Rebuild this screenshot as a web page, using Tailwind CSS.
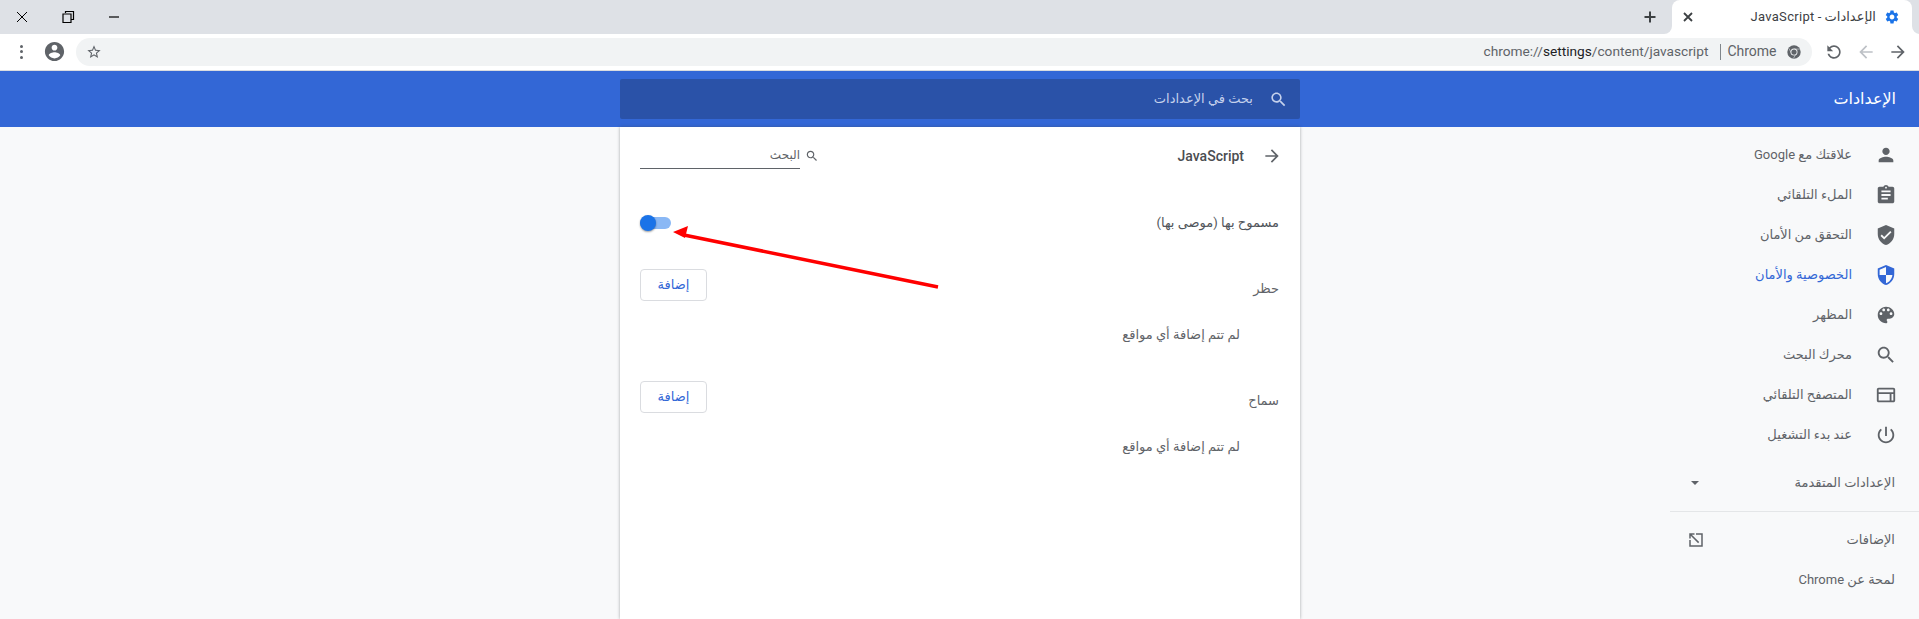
<!DOCTYPE html>
<html lang="ar">
  <head>
    <meta charset="UTF-8" />
    <title>الإعدادات - JavaScript</title>
    <script src="https://cdn.jsdelivr.net/npm/@tailwindcss/browser@4"></script>
  </head>
  <body class="h-[619px] overflow-hidden bg-[#f8f9fa] font-['Roboto','DejaVu_Sans',sans-serif] text-[13px] text-[#5f6368]">
    <!-- Tab strip -->
    <div class="flex h-[34px] items-center bg-[#dee1e6]">
      <div class="flex w-[1643px] items-center pl-[15px] text-black">
        <svg class="h-[14px] w-[14px]" viewBox="0 0 14 14" fill="none" stroke="currentColor"><path d="M2 2l10 10M12 2L2 12" /></svg>
        <svg class="ml-[32px] h-[14px] w-[14px]" viewBox="0 0 14 14" fill="none" stroke="currentColor" stroke-width="1.2"><path d="M4.500 3V1.500h8v8H10.500M2 4h8v8.500H2z" /></svg>
        <svg class="ml-[32px] h-[14px] w-[14px]" viewBox="0 0 14 14" fill="none" stroke="currentColor" stroke-width="1.2"><path d="M2 7h10" /></svg>
      </div>
      <svg class="h-[14px] w-[14px] text-[#3c4043]" viewBox="0 0 14 14" fill="none" stroke="currentColor" stroke-width="2"><path d="M7 1.500v11M1.500 7h11" /></svg>
      <div class="relative ml-[15px] flex h-[34px] w-[240px] items-center self-end rounded-t-lg bg-white pr-[12px] pl-[11px]">
        <div class="absolute bottom-0 -left-2 h-2 w-2 bg-white"><div class="h-2 w-2 rounded-br-lg bg-[#dee1e6]"></div></div>
        <div class="absolute -right-2 bottom-0 h-2 w-2 bg-white"><div class="h-2 w-2 rounded-bl-lg bg-[#dee1e6]"></div></div>
        <svg class="h-[10px] w-[10px] text-[#3c4043]" viewBox="0 0 10 10" fill="none" stroke="currentColor" stroke-width="1.800"><path d="M1 1l8 8M9 1L1 9" /></svg>
        <span dir="rtl" class="mr-[8px] ml-auto text-[13px] tracking-[0.3px] text-[#3c4043]">الإعدادات - JavaScript</span>
        <svg class="h-[16px] w-[16px] text-[#1a73e8]" viewBox="0 0 24 24" fill="currentColor"><path d="M19.140 12.940c.04-.3.06-.61.06-.94 0-.32-.02-.64-.07-.94l2.030-1.580c.18-.14.23-.41.12-.61l-1.920-3.320c-.12-.22-.37-.29-.59-.22l-2.390.96c-.5-.38-1.030-.7-1.620-.94l-.36-2.540c-.04-.24-.24-.41-.48-.41h-3.840c-.24 0-.43.17-.47.41l-.36 2.540c-.59.24-1.130.57-1.620.94l-2.390-.96c-.22-.08-.47 0-.59.22L2.740 8.870c-.12.21-.08.47.12.61l2.030 1.580c-.05.3-.09.63-.09.94s.02.64.07.94l-2.030 1.580c-.18.14-.23.41-.12.61l1.920 3.320c.12.22.37.29.59.22l2.390-.96c.5.38 1.030.7 1.620.94l.36 2.540c.05.24.24.41.48.41h3.840c.24 0 .44-.17.47-.41l.36-2.540c.59-.24 1.130-.56 1.620-.94l2.390.96c.22.08.47 0 .59-.22l1.920-3.320c.12-.22.07-.47-.12-.61l-2.010-1.580zM12 15.600c-1.980 0-3.600-1.620-3.600-3.600s1.620-3.600 3.600-3.600 3.600 1.620 3.600 3.600-1.620 3.600-3.600 3.600z" /></svg>
      </div>
    </div>

    <!-- Toolbar -->
    <div class="flex h-[37px] items-center border-b border-[#dadce0] bg-white pb-[1px]">
      <div class="ml-[19.500px] flex w-[4px] flex-col gap-[2.500px]">
        <span class="h-[3px] w-[3px] rounded-full bg-[#5f6368]"></span>
        <span class="h-[3px] w-[3px] rounded-full bg-[#5f6368]"></span>
        <span class="h-[3px] w-[3px] rounded-full bg-[#5f6368]"></span>
      </div>
      <svg class="ml-[19px] h-[23px] w-[23px] text-[#5f6368]" viewBox="0 0 24 24" fill="currentColor"><path d="M12 2C6.480 2 2 6.480 2 12s4.480 10 10 10 10-4.480 10-10S17.520 2 12 2zm0 3c1.660 0 3 1.340 3 3s-1.340 3-3 3-3-1.340-3-3 1.340-3 3-3zm0 14.200c-2.500 0-4.710-1.280-6-3.220.03-1.990 4-3.080 6-3.080 1.990 0 5.970 1.090 6 3.080-1.290 1.940-3.500 3.220-6 3.220z" /></svg>
      <div class="ml-[10px] flex h-[28px] w-[1736px] items-center rounded-full bg-[#f1f3f4]">
        <svg class="ml-[10px] h-[16px] w-[16px] text-[#5f6368]" viewBox="0 0 24 24" fill="currentColor"><path d="M22 9.240l-7.190-.62L12 2 9.190 8.630 2 9.240l5.460 4.730L5.820 21 12 17.270 18.180 21l-1.630-7.030L22 9.240zM12 15.400l-3.760 2.270 1-4.280-3.320-2.880 4.380-.38L12 6.100l1.710 4.040 4.380.38-3.320 2.880 1 4.280L12 15.400z" /></svg>
        <span class="ml-auto text-[13.700px] text-[#5f6368]">chrome://<span class="text-[#202124]">settings</span>/content/javascript</span>
        <span class="ml-[12px] h-[16px] w-[1px] bg-[#80868b]"></span>
        <span class="ml-[6px] text-[14px] text-[#5f6368]">Chrome</span>
        <svg class="mr-[11px] ml-[10px] h-[14px] w-[14px] text-[#5f6368]" viewBox="0 0 24 24"><circle cx="12" cy="12" r="11.500" fill="currentColor" /><path d="M12 7h10M8 14.500L3 5.500M16 14.500L11 23" stroke="#b5b8bc" stroke-width="1.500" /><circle cx="12" cy="12" r="6" fill="#f1f3f4" /><circle cx="12" cy="12" r="4.500" fill="currentColor" /></svg>
      </div>
      <svg class="ml-[12px] h-[20px] w-[20px] -scale-x-100 text-[#5f6368]" viewBox="0 0 24 24" fill="currentColor"><path d="M17.650 6.350C16.200 4.900 14.210 4 12 4c-4.420 0-7.990 3.580-7.990 8s3.570 8 7.990 8c3.730 0 6.840-2.550 7.730-6h-2.080c-.82 2.330-3.040 4-5.650 4-3.310 0-6-2.690-6-6s2.690-6 6-6c1.660 0 3.140.69 4.220 1.780L13 11h7V4l-2.350 2.350z" /></svg>
      <svg class="ml-[12px] h-[20px] w-[20px] rotate-180 text-[#bdc1c6]" viewBox="0 0 24 24" fill="currentColor"><path d="M12 4l-1.410 1.410L16.170 11H4v2h12.170l-5.580 5.590L12 20l8-8z" /></svg>
      <svg class="ml-[12px] h-[20px] w-[20px] text-[#5f6368]" viewBox="0 0 24 24" fill="currentColor"><path d="M12 4l-1.410 1.410L16.170 11H4v2h12.170l-5.580 5.590L12 20l8-8z" /></svg>
    </div>

    <!-- Settings header -->
    <header dir="rtl" class="flex h-[56px] items-center bg-[#3367d6] text-white">
      <div class="w-[619px] pr-[23px] text-[16px]">الإعدادات</div>
      <div class="flex h-[40px] w-[680px] items-center rounded-[2px] bg-[#2a52a8] pr-[12px] text-[#c5d1ec]">
        <svg class="h-[19px] w-[19px]" viewBox="0 0 24 24" fill="currentColor"><path d="M15.500 14h-.79l-.28-.27C15.410 12.590 16 11.110 16 9.500 16 5.910 13.090 3 9.500 3S3 5.910 3 9.500 5.910 16 9.500 16c1.610 0 3.090-.59 4.230-1.570l.27.28v.79l5 4.990L20.490 19l-4.990-5zm-6 0C7.010 14 5 11.990 5 9.500S7.010 5 9.500 5 14 7.010 14 9.500 11.990 14 9.500 14z" /></svg>
        <span class="mr-[16px]">بحث في الإعدادات</span>
      </div>
    </header>

    <div dir="rtl" class="flex h-[492px]">
      <!-- Sidebar -->
      <nav class="w-[249px] shrink-0 pt-[8px]">
        <a class="flex h-[40px] items-center pr-[22px]"><svg class="h-[22px] w-[22px] fill-current" viewBox="0 0 24 24"><path d="M12 12c2.210 0 4-1.790 4-4s-1.790-4-4-4-4 1.790-4 4 1.790 4 4 4zm0 2c-2.670 0-8 1.340-8 4v2h16v-2c0-2.660-5.330-4-8-4z" /></svg><span class="mr-[23px]">علاقتك مع Google</span></a>
        <a class="flex h-[40px] items-center pr-[22px]"><svg class="h-[22px] w-[22px] fill-current" viewBox="0 0 24 24"><path d="M19 3h-4.180C14.400 1.840 13.300 1 12 1c-1.300 0-2.400.84-2.820 2H5c-1.100 0-2 .9-2 2v14c0 1.100.9 2 2 2h14c1.100 0 2-.9 2-2V5c0-1.100-.9-2-2-2zm-7 0c.55 0 1 .45 1 1s-.45 1-1 1-1-.45-1-1 .45-1 1-1zm2 14H7v-2h7v2zm3-4H7v-2h10v2zm0-4H7V7h10v2z" /></svg><span class="mr-[23px]">الملء التلقائي</span></a>
        <a class="flex h-[40px] items-center pr-[22px]"><svg class="h-[22px] w-[22px] fill-current" viewBox="0 0 24 24"><path d="M12 1L3 5v6c0 5.550 3.840 10.740 9 12 5.160-1.260 9-6.450 9-12V5l-9-4zm-2 16l-4-4 1.410-1.410L10 14.170l6.590-6.590L18 9l-8 8z" /></svg><span class="mr-[23px]">التحقق من الأمان</span></a>
        <a class="flex h-[40px] items-center pr-[22px] text-[#3367d6]"><svg class="h-[22px] w-[22px] fill-current" viewBox="0 0 24 24"><path d="M12 1L3 5v6c0 5.550 3.840 10.740 9 12 5.160-1.260 9-6.450 9-12V5l-9-4zm0 10.990h7c-.53 4.120-3.280 7.790-7 8.940V12H5V6.300l7-3.110v8.800z" /></svg><span class="mr-[23px]">الخصوصية والأمان</span></a>
        <a class="flex h-[40px] items-center pr-[22px]"><svg class="h-[22px] w-[22px] fill-current" viewBox="0 0 24 24"><path d="M12 3c-4.970 0-9 4.030-9 9s4.030 9 9 9c.83 0 1.500-.67 1.500-1.500 0-.39-.15-.74-.39-1.010-.23-.26-.38-.61-.38-.99 0-.83.67-1.500 1.500-1.500H16c2.760 0 5-2.240 5-5 0-4.420-4.030-8-9-8zm-5.500 9c-.83 0-1.500-.67-1.500-1.500S5.670 9 6.500 9 8 9.670 8 10.500 7.330 12 6.500 12zm3-4C8.670 8 8 7.330 8 6.500S8.670 5 9.500 5s1.500.67 1.500 1.500S10.330 8 9.500 8zm5 0c-.83 0-1.500-.67-1.500-1.500S13.670 5 14.500 5s1.500.67 1.500 1.500S15.330 8 14.500 8zm3 4c-.83 0-1.500-.67-1.500-1.500S16.670 9 17.500 9s1.500.67 1.500 1.500-.67 1.500-1.500 1.500z" /></svg><span class="mr-[23px]">المظهر</span></a>
        <a class="flex h-[40px] items-center pr-[22px]"><svg class="h-[22px] w-[22px] fill-current" viewBox="0 0 24 24"><path d="M15.500 14h-.79l-.28-.27C15.410 12.590 16 11.110 16 9.500 16 5.910 13.090 3 9.500 3S3 5.910 3 9.500 5.910 16 9.500 16c1.610 0 3.090-.59 4.230-1.570l.27.28v.79l5 4.990L20.490 19l-4.990-5zm-6 0C7.010 14 5 11.990 5 9.500S7.010 5 9.500 5 14 7.010 14 9.500 11.990 14 9.500 14z" /></svg><span class="mr-[23px]">محرك البحث</span></a>
        <a class="flex h-[40px] items-center pr-[22px]"><svg class="h-[22px] w-[22px] fill-current" viewBox="0 0 24 24"><path d="M20 4H4c-1.100 0-2 .9-2 2v12c0 1.100.9 2 2 2h16c1.100 0 2-.9 2-2V6c0-1.100-.9-2-2-2zM4 18v-7h12v7H4zm16 0h-2v-7h2v7zm0-9H4V6h16v3z" /></svg><span class="mr-[23px]">المتصفح التلقائي</span></a>
        <a class="flex h-[40px] items-center pr-[22px]"><svg class="h-[22px] w-[22px] fill-current" viewBox="0 0 24 24"><path d="M13 3h-2v10h2V3zm4.830 2.170l-1.420 1.420C17.990 7.860 19 9.810 19 12c0 3.870-3.130 7-7 7s-7-3.130-7-7c0-2.190 1.010-4.140 2.580-5.420L6.170 5.170C4.230 6.820 3 9.260 3 12c0 4.970 4.030 9 9 9s9-4.030 9-9c0-2.740-1.230-5.180-3.170-6.830z" /></svg><span class="mr-[23px]">عند بدء التشغيل</span></a>
        <a class="mt-[8px] flex h-[40px] items-center justify-between pr-[24px] pl-[21px]"><span>الإعدادات المتقدمة</span><span class="h-0 w-0 border-x-[4px] border-t-[4px] border-x-transparent border-t-[#5f6368]"></span></a>
        <div class="mt-[8px] border-t border-[#e4e6e8]"></div>
        <a class="mt-[8px] flex h-[40px] items-center justify-between pr-[24px] pl-[17px]"><span>الإضافات</span><svg class="h-[18px] w-[18px] -scale-x-100 fill-current" viewBox="0 0 24 24"><path d="M19 19H5V5h7V3H3v18h18v-9h-2v7zM14 3v2h3.590l-9.830 9.830 1.410 1.410L19 6.410V10h2V3h-7z" /></svg></a>
        <a class="flex h-[40px] items-center pr-[24px]">لمحة عن Chrome</a>
      </nav>

      <div class="w-[370px] shrink-0"></div>

      <!-- Content card -->
      <main class="w-[680px] shrink-0 bg-white text-[#5f6368] shadow-[0_0_3px_rgba(60,64,67,0.45)]">
        <div class="flex h-[58px] items-center pr-[18px] pl-[20px]">
          <svg class="h-[20px] w-[20px]" viewBox="0 0 24 24" fill="currentColor"><path d="M12 4l-1.410 1.410L16.170 11H4v2h12.170l-5.580 5.590L12 20l8-8z" /></svg>
          <span class="mr-[18px] text-[14px] font-medium text-[#4a4d51]">JavaScript</span>
          <div class="mr-auto flex items-center">
            <svg class="h-[14px] w-[14px]" viewBox="0 0 24 24" fill="currentColor"><path d="M15.500 14h-.79l-.28-.27C15.410 12.590 16 11.110 16 9.500 16 5.910 13.090 3 9.500 3S3 5.910 3 9.500 5.910 16 9.500 16c1.610 0 3.090-.59 4.230-1.570l.27.28v.79l5 4.990L20.490 19l-4.990-5zm-6 0C7.010 14 5 11.990 5 9.500S7.010 5 9.500 5 14 7.010 14 9.500 11.990 14 9.500 14z" /></svg>
            <div class="mr-[5px] flex h-[26px] w-[160px] items-center border-b border-[#5f6368] pb-[2px] text-[12px]">البحث</div>
          </div>
        </div>
        <div class="flex h-[76px] items-center justify-between pr-[21px] pl-[20px] text-[#50545a]">
          <span>مسموح بها (موصى بها)</span>
          <div class="relative h-[12px] w-[31px] rounded-full bg-[#8ab8f5]">
            <span class="absolute top-[-2px] left-0 h-[16px] w-[16px] rounded-full bg-[#1a73e8] shadow-[0_1px_2px_rgba(0,0,0,0.4)]"></span>
          </div>
        </div>
        <div class="flex h-[48px] items-center justify-between pr-[21px] pl-[20px]">
          <span class="mt-[8px]">حظر</span>
          <button class="h-[32px] w-[67px] rounded border border-[#dadce0] bg-white text-[#3367d6]">إضافة</button>
        </div>
        <p class="flex h-[52px] items-center pr-[60px]">لم تتم إضافة أي مواقع</p>
        <div class="mt-[12px] flex h-[48px] items-center justify-between pr-[21px] pl-[20px]">
          <span class="mt-[8px]">سماح</span>
          <button class="h-[32px] w-[67px] rounded border border-[#dadce0] bg-white text-[#3367d6]">إضافة</button>
        </div>
        <p class="flex h-[52px] items-center pr-[60px]">لم تتم إضافة أي مواقع</p>
      </main>
    </div>

    <!-- Annotation arrow drawn over the page -->
    <svg class="absolute top-0 left-0 h-[619px] w-[1919px]" viewBox="0 0 1919 619" fill="none">
      <path d="M938 287L684 235" stroke="#ff0000" stroke-width="3.500" />
      <path d="M673 232L688 226L685 238z" fill="#ff0000" />
    </svg>
  </body>
</html>
